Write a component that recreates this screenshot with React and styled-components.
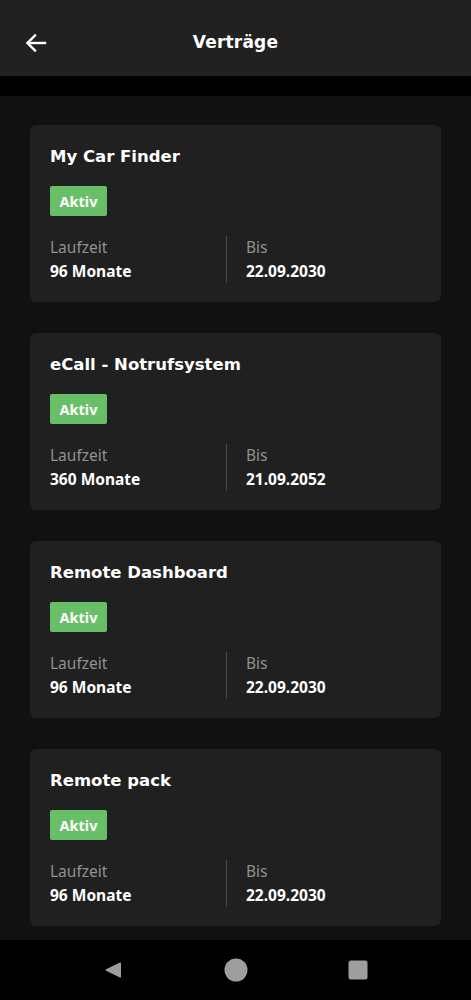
import React from 'react';
import styled, { createGlobalStyle } from 'styled-components';

const GlobalStyle = createGlobalStyle`
  html, body {
    margin: 0;
    padding: 0;
    background: #111111;
  }
  * {
    box-sizing: border-box;
  }
`;

const Screen = styled.div`
  width: 471px;
  height: 1000px;
  display: flex;
  flex-direction: column;
  background: #111111;
  font-family: "Noto Sans", "Open Sans", sans-serif;
  color: #ffffff;
  overflow: hidden;
`;

const Header = styled.header`
  height: 76px;
  flex-shrink: 0;
  background: #212121;
  display: flex;
  align-items: center;
  justify-content: center;
  padding-top: 8px;
  position: relative;
`;

const BackButton = styled.button`
  position: absolute;
  left: 22px;
  top: 29px;
  width: 28px;
  height: 28px;
  padding: 0;
  border: 0;
  background: transparent;
  color: #ffffff;
  display: flex;
  align-items: center;
  justify-content: center;
`;

const HeaderTitle = styled.h1`
  margin: 0;
  font-family: "DejaVu Sans", sans-serif;
  font-size: 17px;
  font-weight: 700;
  letter-spacing: 0.2px;
`;

const Gap = styled.div`
  height: 20px;
  flex-shrink: 0;
  background: #000000;
`;

const List = styled.main`
  flex: 1;
  display: flex;
  flex-direction: column;
  gap: 31px;
  padding: 29px 30px 0;
  overflow: hidden;
`;

const Card = styled.section`
  background: #202020;
  border-radius: 6px;
  padding: 20px 20px 19px;
  flex-shrink: 0;
`;

const CardTitle = styled.h2`
  margin: 0;
  font-family: "DejaVu Sans", sans-serif;
  font-size: 16.5px;
  font-weight: 700;
  line-height: 23px;
`;

const Badge = styled.span`
  display: inline-flex;
  align-items: center;
  justify-content: center;
  margin-top: 18px;
  width: 57px;
  height: 30px;
  border-radius: 2px;
  background: ${(p) => p.color || '#69bf67'};
  font-size: 14.5px;
  font-weight: 700;
  color: #ffffff;
`;

const Stats = styled.div`
  display: grid;
  grid-template-columns: 176px 1fr;
  margin-top: 20px;
`;

const Stat = styled.div`
  display: flex;
  flex-direction: column;
  gap: 2px;
  padding: 0 0 0 ${(p) => (p.divided ? '19px' : '0')};
  border-left: ${(p) => (p.divided ? '1px solid #4a4a4a' : 'none')};
  min-height: 47px;
`;

const Label = styled.span`
  font-size: 15.5px;
  line-height: 22px;
  color: #909090;
`;

const Value = styled.span`
  font-size: 15.5px;
  line-height: 22px;
  font-weight: 700;
  color: #ffffff;
`;

const NavBar = styled.nav`
  height: 60px;
  flex-shrink: 0;
  background: #000000;
  display: flex;
  align-items: center;
  justify-content: center;
  gap: 100px;
  padding-right: 2px;
`;

const contracts = [
  { title: 'My Car Finder', duration: '96 Monate', until: '22.09.2030' },
  { title: 'eCall - Notrufsystem', duration: '360 Monate', until: '21.09.2052' },
  { title: 'Remote Dashboard', duration: '96 Monate', until: '22.09.2030' },
  { title: 'Remote pack', duration: '96 Monate', until: '22.09.2030' },
];

const App = () => (
  <>
    <GlobalStyle />
    <Screen>
      <Header>
        <BackButton aria-label="Zurück">
          <svg width="24" height="24" viewBox="0 0 24 24" fill="none" stroke="#fff" strokeWidth="2.4" strokeLinecap="square">
            <path d="M21 12H4" />
            <path d="M11 4.5L3.5 12L11 19.5" />
          </svg>
        </BackButton>
        <HeaderTitle>Verträge</HeaderTitle>
      </Header>
      <Gap />
      <List>
        {contracts.map((c) => (
          <Card key={c.title}>
            <CardTitle>{c.title}</CardTitle>
            <Badge>Aktiv</Badge>
            <Stats>
              <Stat>
                <Label>Laufzeit</Label>
                <Value>{c.duration}</Value>
              </Stat>
              <Stat divided>
                <Label>Bis</Label>
                <Value>{c.until}</Value>
              </Stat>
            </Stats>
          </Card>
        ))}
      </List>
      <NavBar>
        <svg width="22" height="22" viewBox="0 0 22 22">
          <path d="M18 3.5 Q19 3 19 4.5 V17.5 Q19 19 18 18.5 L4 11.8 Q3 11 4 10.2 Z" fill="#9e9e9e" />
        </svg>
        <svg width="24" height="24" viewBox="0 0 24 24">
          <circle cx="12" cy="12" r="11.5" fill="#9e9e9e" />
        </svg>
        <svg width="20" height="20" viewBox="0 0 20 20">
          <rect x="0.5" y="0.5" width="19" height="19" rx="2.5" fill="#9e9e9e" />
        </svg>
      </NavBar>
    </Screen>
  </>
);

export default App;
